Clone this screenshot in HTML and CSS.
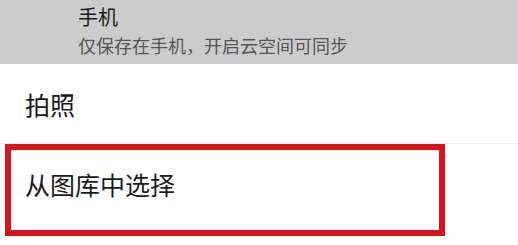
FILE: index.html
```html
<!DOCTYPE html>
<html lang="zh-CN">
<head>
<meta charset="utf-8">
<title>选择图片</title>
<link rel="stylesheet" href="styles.css">
</head>
<body>
  <div class="sheet">
    <div class="storage">
      <div class="storage-title">手机</div>
      <div class="storage-desc">仅保存在手机，开启云空间可同步</div>
    </div>
    <div class="option option-first">拍照</div>
    <div class="option option-marked">
      从图库中选择
      <span class="highlight"></span>
    </div>
  </div>
</body>
</html>
```

FILE: styles.css
```css
html, body {
  margin: 0;
  padding: 0;
  background: #ffffff;
}

body {
  width: 518px;
  height: 245px;
  overflow: hidden;
  font-family: "Noto Sans CJK SC", "Noto Sans", sans-serif;
}

.sheet {
  display: flex;
  flex-direction: column;
}

.storage {
  background: #cccccc;
  height: 64px;
  box-sizing: border-box;
  padding: 5px 0 0 78px;
}

.storage-title {
  font-size: 20px;
  line-height: 24px;
  color: #1c1c1c;
}

.storage-desc {
  margin-top: 4px;
  font-size: 18px;
  line-height: 24px;
  color: #555555;
}

.option {
  display: flex;
  align-items: center;
  height: 79px;
  padding-left: 25px;
  font-size: 25px;
  color: #1a1a1a;
}

.option-first {
  border-bottom: 1px solid #ececec;
}

.option-marked {
  position: relative;
  height: 80px;
}

.highlight {
  position: absolute;
  left: 5px;
  top: 0;
  width: 440px;
  height: 92px;
  box-sizing: border-box;
  border: 6px solid #d8141b;
}
```
